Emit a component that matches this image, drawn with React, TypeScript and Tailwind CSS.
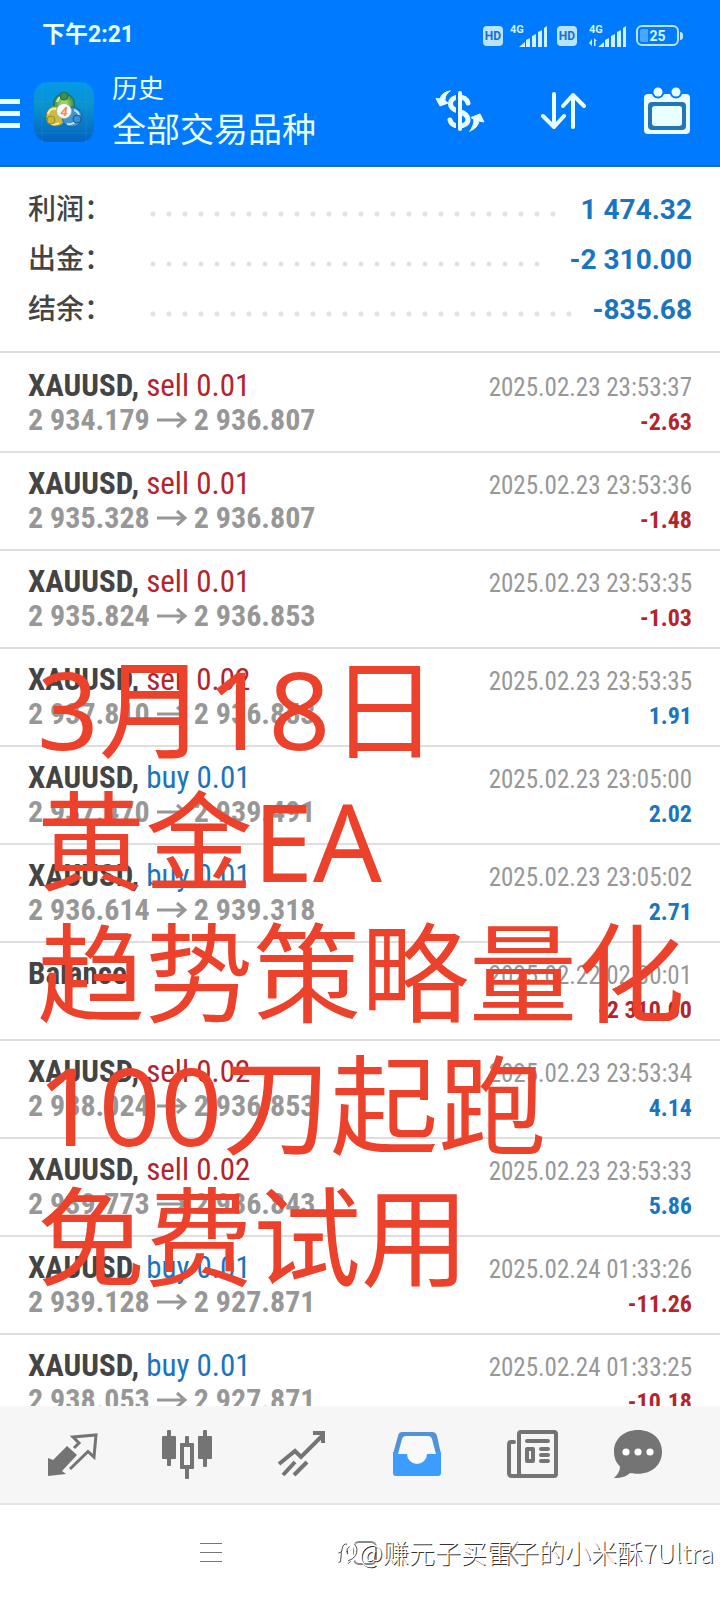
import type { ReactNode } from 'react';

type Deal = {
  symbol: string;
  side?: 'buy' | 'sell';
  volume?: string;
  open?: string;
  close?: string;
  time: string;
  profit: string;
};

const deals: Deal[] = [
  { symbol: 'XAUUSD', side: 'sell', volume: '0.01', open: '2 934.179', close: '2 936.807', time: '2025.02.23 23:53:37', profit: '-2.63' },
  { symbol: 'XAUUSD', side: 'sell', volume: '0.01', open: '2 935.328', close: '2 936.807', time: '2025.02.23 23:53:36', profit: '-1.48' },
  { symbol: 'XAUUSD', side: 'sell', volume: '0.01', open: '2 935.824', close: '2 936.853', time: '2025.02.23 23:53:35', profit: '-1.03' },
  { symbol: 'XAUUSD', side: 'sell', volume: '0.02', open: '2 937.810', close: '2 936.853', time: '2025.02.23 23:53:35', profit: '1.91' },
  { symbol: 'XAUUSD', side: 'buy', volume: '0.01', open: '2 937.470', close: '2 939.491', time: '2025.02.23 23:05:00', profit: '2.02' },
  { symbol: 'XAUUSD', side: 'buy', volume: '0.01', open: '2 936.614', close: '2 939.318', time: '2025.02.23 23:05:02', profit: '2.71' },
  { symbol: 'Balance', time: '2025.02.22 02:30:01', profit: '-2 310.00' },
  { symbol: 'XAUUSD', side: 'sell', volume: '0.02', open: '2 938.024', close: '2 936.853', time: '2025.02.23 23:53:34', profit: '4.14' },
  { symbol: 'XAUUSD', side: 'sell', volume: '0.02', open: '2 939.773', close: '2 936.843', time: '2025.02.23 23:53:33', profit: '5.86' },
  { symbol: 'XAUUSD', side: 'buy', volume: '0.01', open: '2 939.128', close: '2 927.871', time: '2025.02.24 01:33:26', profit: '-11.26' },
  { symbol: 'XAUUSD', side: 'buy', volume: '0.01', open: '2 938.053', close: '2 927.871', time: '2025.02.24 01:33:25', profit: '-10.18' },
];

const summary = [
  { label: '利润：', value: '1 474.32' },
  { label: '出金：', value: '-2 310.00' },
  { label: '结余：', value: '-835.68' },
];

const headline = ['3月18日', '黄金EA', '趋势策略量化', '100刀起跑', '免费试用'];

function HdBadge() {
  return (
    <span className="flex h-5 w-5 items-center justify-center rounded-sm bg-[#b9e4ff] font-['Roboto',sans-serif] text-xs font-bold text-[#1271d6]">
      HD
    </span>
  );
}

function Signal({ data = false }: { data?: boolean }) {
  return (
    <svg width="38" height="24" viewBox="0 0 38 24" fill="#cdf1ff">
      <text x="0" y="9" fontSize="11" fontWeight="700" fontFamily="Roboto, sans-serif">4G</text>
      <path d="M9 23l6-5v5zM16 16l4-2v9h-4zM22 12l4-2v13h-4zM28 8l4-2v17h-4zM34 4l3-2v21h-3z" />
      {data && <path d="M3 15v7l-3-3zM5 22v-8l3 3H6.500v5z" />}
    </svg>
  );
}

function Battery() {
  return (
    <span className="flex items-center">
      <span className="flex h-[21px] w-[43px] items-center justify-center rounded-md border-2 border-[#b9e4ff] bg-[linear-gradient(90deg,#4aa6ff_25%,transparent_25%)] bg-clip-content p-[2px] font-['Roboto',sans-serif] text-sm font-bold text-[#d8f6ff]">
        25
      </span>
      <span className="ml-px h-2 w-[3px] rounded-r-sm bg-[#b9e4ff]" />
    </span>
  );
}

function AppLogo() {
  return (
    <svg width="60" height="60" viewBox="0 0 60 60" role="img" aria-label="MetaTrader 4">
      <defs>
        <linearGradient id="tile" x1="0" y1="0" x2="0" y2="1">
          <stop offset="0" stopColor="#0499e8" />
          <stop offset=".4" stopColor="#0a92cf" />
          <stop offset="1" stopColor="#0461c0" />
        </linearGradient>
        <radialGradient id="green"><stop offset=".3" stopColor="#a6cf67" /><stop offset="1" stopColor="#2c8751" /></radialGradient>
      </defs>
      <rect width="60" height="60" rx="14" fill="url(#tile)" />
      <path d="M8 0v60M52 0v60M0 20h60M0 51h60" stroke="#2fb2de" strokeOpacity=".2" />
      <circle cx="30" cy="22" r="10.500" fill="url(#green)" stroke="#1f6f4c" />
      <circle cx="22" cy="34" r="10" fill="#cdb944" stroke="#6d8a4a" />
      <circle cx="38" cy="35" r="10" fill="#3f95cf" stroke="#1b65a5" />
      <path d="M23 20q2-6 7-6" stroke="#d7f0a1" strokeWidth="2" fill="none" />
      <path d="M14 32q2-6 8-5M16 41q4 3 9 0" stroke="#f6ec9a" strokeWidth="2" fill="none" />
      <path d="M33 42q7 1 11-5M40 28q5 2 5 6" stroke="#b4e4fa" strokeWidth="2" fill="none" />
      <circle cx="30" cy="14" r="4" fill="#3c8f4d" stroke="#1f6f4c" />
      <circle cx="17" cy="38" r="4" fill="#d7b52a" stroke="#8a8e3c" />
      <circle cx="43" cy="37" r="4" fill="#3992d8" stroke="#155b9c" />
      <circle cx="30" cy="29" r="7.500" fill="#f7fbf5" stroke="#8eb8a8" strokeWidth=".8" />
      <text x="30" y="34" textAnchor="middle" fontSize="13" fontWeight="700" fontStyle="italic" fontFamily="Roboto, sans-serif" fill="#ef8a62">4</text>
    </svg>
  );
}

function CurrencyIcon() {
  return (
    <svg width="50" height="44" viewBox="0 0 50 44" fill="none" stroke="#eaffff" strokeLinecap="round">
      <path d="M33 14c-1-4-5-6-9-6-5 0-8.500 3-8.500 7 0 4 4 6 8.500 7.500 5 1.500 9 3.500 9 8 0 4-4 6.500-9 6.500s-8-2-9-6" strokeWidth="5" />
      <path d="M22 4v36" stroke="#1270d4" strokeWidth="2" strokeLinecap="butt" />
      <path d="M25 4v36" strokeWidth="4" />
      <path d="M15 2C9 3 6 6 5 10L1 9.500 5 17l8-3-3-2.500C10 8 11 5 15 2z" fill="#eaffff" strokeWidth="1" />
      <path d="M35 42c5-2 8-5 9-10L49 33l-4-8-9 3.500 3 2c0 4-1 7-4 11.500z" fill="#eaffff" strokeWidth="1" />
    </svg>
  );
}

function SortIcon() {
  return (
    <svg width="46" height="38" viewBox="0 0 46 38" fill="none" stroke="#eaffff" strokeWidth="4" strokeLinecap="round" strokeLinejoin="round">
      <path d="M13 2v33M2 24l11 11 10-11M32 35V3M22 14L32 3l11 11" />
    </svg>
  );
}

function CalendarIcon() {
  return (
    <svg width="48" height="48" viewBox="0 0 48 48">
      <rect x="1" y="7" width="46" height="40" rx="4" fill="#eaffff" />
      <rect x="5" y="15" width="38" height="28" rx="4" fill="#2376b5" />
      <rect x="9" y="19" width="30" height="20" rx="3" fill="#eaffff" />
      <circle cx="15" cy="5" r="6.500" fill="#0079ff" />
      <circle cx="33" cy="5" r="6.500" fill="#0079ff" />
      <circle cx="15" cy="5" r="4.500" fill="#eaffff" />
      <circle cx="33" cy="5" r="4.500" fill="#eaffff" />
    </svg>
  );
}

const tabs: { name: string; icon: ReactNode }[] = [
  {
    name: '行情',
    icon: (
      <svg width="52" height="52" viewBox="0 0 52 52">
        <path d="M2 30l5 2 14-14 10 9-15 16 4 3-18 2z" fill="#747474" />
        <path d="M28 20l5-5-6-6 23-2-2 22-6-5.500L24 41" fill="none" stroke="#747474" strokeWidth="3" />
      </svg>
    ),
  },
  {
    name: '图表',
    icon: (
      <svg width="52" height="52" viewBox="0 0 52 52" fill="#747474">
        <rect x="6" y="2" width="4" height="36" rx="1" />
        <rect x="1" y="8" width="14" height="23" rx="1" />
        <rect x="24" y="8" width="4" height="43" rx="1" />
        <rect x="19" y="15" width="14" height="26" rx="1" />
        <rect x="23" y="19" width="6" height="18" fill="#f6f6f6" />
        <rect x="42" y="2" width="4" height="37" rx="1" />
        <rect x="37" y="8" width="14" height="23" rx="1" />
      </svg>
    ),
  },
  {
    name: '交易',
    icon: (
      <svg width="52" height="52" viewBox="0 0 52 52" fill="none" stroke="#747474" strokeWidth="4">
        <path d="M3 36l16-13 6 6L47 7M37 5h10v10M7 47l12-13M18 47l13-13" />
      </svg>
    ),
  },
  {
    name: '历史',
    icon: (
      <svg width="52" height="52" viewBox="0 0 52 52">
        <path d="M11 4h30q4 0 5 4l4 18H2L7 8q1-4 4-4z" fill="#5093d8" />
        <path d="M2 24h48v21q0 3-3 3H5q-3 0-3-3z" fill="#3d9cff" />
        <path d="M15 8h22q3 0 4 3l4 15h-9a10 10 0 0 1-20 0H7l4-15q1-3 4-3z" fill="#f9f9f9" />
      </svg>
    ),
  },
  {
    name: '新闻',
    icon: (
      <svg width="52" height="52" viewBox="0 0 52 52" fill="none" stroke="#747474" strokeWidth="4" strokeLinejoin="round">
        <rect x="13" y="4" width="37" height="44" rx="2" />
        <path d="M8 14H5q-2 0-2 3v28q0 3 3 3h8M21 13h21" strokeLinecap="round" />
        <path d="M35 21h7M35 27h7M35 33h7" strokeLinecap="round" />
        <rect x="21" y="21" width="6" height="12" />
      </svg>
    ),
  },
  {
    name: '消息',
    icon: (
      <svg width="52" height="52" viewBox="0 0 52 52">
        <path d="M26 2C12 2 2 11 2 23.500 2 30 4 35 8 38.500 8 43 6 46 2 50c8 0 13-2 16-5 2.500.600 5 .800 8 .800 14 0 24-9 24-22S40 2 26 2z" fill="#747474" />
        <circle cx="14" cy="24" r="3.600" fill="#fff" />
        <circle cx="26" cy="24" r="3.600" fill="#fff" />
        <circle cx="38" cy="24" r="3.600" fill="#fff" />
      </svg>
    ),
  },
];

function DealRow({ deal }: { deal: Deal }) {
  const tone = deal.side === 'buy' ? 'text-[#1a75c0]' : 'text-[#b3252c]';
  const profitTone = deal.profit.startsWith('-') ? 'text-[#b3252c]' : 'text-[#1a75c0]';
  return (
    <li className="flex h-[98px] shrink-0 justify-between border-b-2 border-[#dedede] px-7 pt-[14px] font-['Roboto_Condensed','Liberation_Sans_Narrow',sans-serif] leading-[34px] whitespace-nowrap">
      <div>
        <p className="text-[31px]">
          <span className="font-bold text-[#444]">{deal.symbol}{deal.side && ','}</span>
          {deal.side && <span className={tone}> {deal.side} {deal.volume}</span>}
        </p>
        {deal.open && (
          <p className="flex items-center text-[30px] font-bold text-[#979797]">
            {deal.open}
            <svg className="mx-1.5" width="32" height="18" viewBox="0 0 32 18" fill="none" stroke="#979797" strokeWidth="3" role="img" aria-label="→">
              <path d="M1 9h28M21 2l8 7-8 7" />
            </svg>
            {deal.close}
          </p>
        )}
      </div>
      <div className="pt-0.5 text-right">
        <p className="text-[25px] text-[#979797]">{deal.time}</p>
        <p className={`text-[24px] font-bold ${profitTone}`}>{deal.profit}</p>
      </div>
    </li>
  );
}

export default function App() {
  return (
    <div className="relative flex h-screen flex-col overflow-hidden bg-white font-['Roboto','Noto_Sans_CJK_SC',sans-serif]">
      <header className="shrink-0 border-b-2 border-[#1d69b5] bg-[#007aff] text-[#e6ffff]">
        <div className="flex h-[71px] items-center justify-between pr-[37px] pl-[42px]">
          <span className="text-[23px] font-bold">下午2:21</span>
          <div className="flex items-center gap-[9px]">
            <div className="flex items-center gap-[7px]">
              <HdBadge />
              <Signal />
            </div>
            <div className="flex items-center gap-3">
              <HdBadge />
              <Signal data />
            </div>
            <Battery />
          </div>
        </div>
        <div className="flex h-[94px] items-start">
          <button type="button" aria-label="菜单" className="mt-7 flex w-5 flex-col gap-[7px]">
            <span className="h-[5px] w-full bg-[#eaffff]" />
            <span className="h-[5px] w-full bg-[#eaffff]" />
            <span className="h-[5px] w-full bg-[#eaffff]" />
          </button>
          <div className="mt-[11px] ml-[14px]"><AppLogo /></div>
          <div className="ml-[18px]">
            <p className="text-[26px] leading-9">历史</p>
            <h1 className="text-[34px] leading-[46px]">全部交易品种</h1>
          </div>
          <div className="mt-4 mr-[29px] ml-auto flex h-12 items-center gap-14">
            <button type="button" aria-label="货币"><CurrencyIcon /></button>
            <button type="button" aria-label="排序"><SortIcon /></button>
            <button type="button" aria-label="日期"><CalendarIcon /></button>
          </div>
        </div>
      </header>

      <main className="relative flex flex-1 flex-col overflow-hidden">
        <dl className="flex h-[186px] shrink-0 flex-col border-b-2 border-[#dedede] px-7 pt-[18px]">
          {summary.map((s) => (
            <div key={s.label} className="flex h-[50px] items-center">
              <dt className="w-[117px] text-[28px] font-medium text-[#444]">{s.label}</dt>
              <span className="mt-2 mr-5 h-4 flex-1 bg-[radial-gradient(circle,#e2e2e2_2px,transparent_3px)] bg-size-[16px_16px]" />
              <dd className="text-[28px] font-bold text-[#1a75c0]">{s.value}</dd>
            </div>
          ))}
        </dl>
        <ul className="pt-0.5">
          {deals.map((d, i) => <DealRow key={i} deal={d} />)}
        </ul>
      </main>

      <nav className="grid h-[99px] shrink-0 grid-cols-[6fr_6fr_6fr_6fr_6fr_5fr] items-start justify-items-center border-b-2 border-[#e4e4e4] bg-[#f6f6f6] pt-[22px] pr-[34px] pl-[14px]">
        {tabs.map((t) => (
          <button key={t.name} type="button" aria-label={t.name}>{t.icon}</button>
        ))}
      </nav>

      <footer className="relative flex h-[95px] shrink-0 items-center px-[200px]">
        <div className="flex w-full items-center justify-between">
          <button type="button" aria-label="最近任务" className="flex w-[22px] flex-col gap-2">
            <span className="h-px w-full bg-[#777]" />
            <span className="h-px w-full bg-[#777]" />
            <span className="h-px w-full bg-[#777]" />
          </button>
          <button type="button" aria-label="主屏幕" className="h-6 w-6 rounded-md border-2 border-[#888]" />
          <button type="button" aria-label="返回">
            <svg width="12" height="24" viewBox="0 0 12 24" fill="none" stroke="#888" strokeWidth="2"><path d="M10 1L2 12l8 11" /></svg>
          </button>
        </div>
        <p className="absolute top-[29px] right-[6px] flex items-center font-['Noto_Sans_CJK_SC',sans-serif] text-[26px] leading-9 font-light whitespace-nowrap text-white [text-shadow:1px_1px_0_#333]">
          <svg width="22" height="28" viewBox="0 0 25 28" fill="none" strokeLinecap="round">
            <path d="M13 6Q21 3 22 12T12 26" stroke="#fff" strokeWidth="5" />
            <path d="M11 5Q7 4 6 10L5 14 2 15M5 15L4 25 2 26M14 8Q11 9 11 14M12 13v3" stroke="#333" />
            <path d="M20 5q5 6 1 13-2 4-8 6M13 27l2-2" stroke="#333" />
          </svg>
          @赚元子买雷子的小米酥7Ultra
        </p>
      </footer>

      <div className="pointer-events-none absolute top-[643px] left-[37px] font-['Noto_Sans','Noto_Sans_CJK_SC',sans-serif] text-[108px] leading-[132px] whitespace-nowrap text-[#ec412a]">
        {headline.map((line) => <p key={line}>{line}</p>)}
      </div>
    </div>
  );
}
